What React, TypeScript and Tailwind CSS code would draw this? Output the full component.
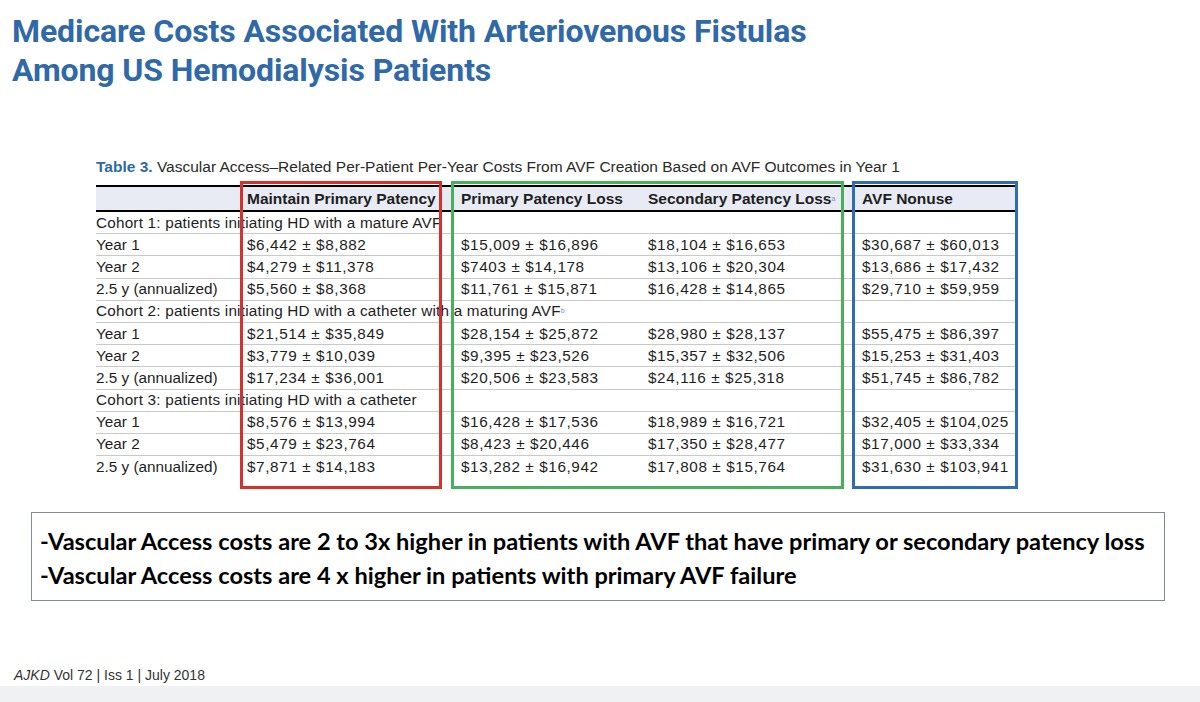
import React from "react";

type Row =
  | { kind: "cohort"; text: string; sup?: string }
  | { kind: "data"; label: string; vals: [string, string, string, string] };

const ROWS: Row[] = [
  { kind: "cohort", text: "Cohort 1: patients initiating HD with a mature AVF" },
  { kind: "data", label: "Year 1", vals: ["$6,442 ± $8,882", "$15,009 ± $16,896", "$18,104 ± $16,653", "$30,687 ± $60,013"] },
  { kind: "data", label: "Year 2", vals: ["$4,279 ± $11,378", "$7403 ± $14,178", "$13,106 ± $20,304", "$13,686 ± $17,432"] },
  { kind: "data", label: "2.5 y (annualized)", vals: ["$5,560 ± $8,368", "$11,761 ± $15,871", "$16,428 ± $14,865", "$29,710 ± $59,959"] },
  { kind: "cohort", text: "Cohort 2: patients initiating HD with a catheter with a maturing AVF", sup: "b" },
  { kind: "data", label: "Year 1", vals: ["$21,514 ± $35,849", "$28,154 ± $25,872", "$28,980 ± $28,137", "$55,475 ± $86,397"] },
  { kind: "data", label: "Year 2", vals: ["$3,779 ± $10,039", "$9,395 ± $23,526", "$15,357 ± $32,506", "$15,253 ± $31,403"] },
  { kind: "data", label: "2.5 y (annualized)", vals: ["$17,234 ± $36,001", "$20,506 ± $23,583", "$24,116 ± $25,318", "$51,745 ± $86,782"] },
  { kind: "cohort", text: "Cohort 3: patients initiating HD with a catheter" },
  { kind: "data", label: "Year 1", vals: ["$8,576 ± $13,994", "$16,428 ± $17,536", "$18,989 ± $16,721", "$32,405 ± $104,025"] },
  { kind: "data", label: "Year 2", vals: ["$5,479 ± $23,764", "$8,423 ± $20,446", "$17,350 ± $28,477", "$17,000 ± $33,334"] },
  { kind: "data", label: "2.5 y (annualized)", vals: ["$7,871 ± $14,183", "$13,282 ± $16,942", "$17,808 ± $15,764", "$31,630 ± $103,941"] },
];

const GRID = "grid grid-cols-[148px_214px_187px_214px_156px]";

export default function App() {
  return (
    <div
      className="w-[1200px] h-[702px] bg-white flex flex-col overflow-hidden"
      style={{ fontFamily: "'Liberation Sans', Arial, sans-serif" }}
    >
      {/* Title */}
      <div
        className="pt-[12px] pl-[12px] text-[32px] leading-[39px] font-bold text-[#2f69a8] tracking-[-0.1px]"
        style={{ fontFamily: "Roboto, 'Liberation Sans', sans-serif" }}
      >
        <div>Medicare Costs Associated With Arteriovenous Fistulas</div>
        <div>Among US Hemodialysis Patients</div>
      </div>

      {/* Table */}
      <div className="pl-[96px] mt-[68px]">
        <div className="text-[15.5px] leading-[18px] text-[#2a2a2a]">
          <span className="font-bold text-[#2c6aa8]">Table 3.</span> Vascular Access–Related Per-Patient Per-Year Costs From AVF Creation Based on AVF Outcomes in Year 1
        </div>

        <div className="relative w-[919px] mt-[9px] text-[#1e1e1e]">
          <div className={`${GRID} h-[27px] items-center bg-[#e9ebf4] border-t-2 border-b-2 border-black text-[15.5px] font-bold`}>
            <div />
            <div className="pl-[3px]">Maintain Primary Patency</div>
            <div className="pl-[3px]">Primary Patency Loss</div>
            <div className="pl-[3px]">
              Secondary Patency Loss<sup className="text-[7px] text-[#7b8fc4] font-normal">a</sup>
            </div>
            <div className="pl-[3px]">AVF Nonuse</div>
          </div>

          {ROWS.map((r, i) => (
            <div
              key={i}
              className={`${GRID} h-[22.2px] items-center text-[15.3px] leading-[18px] ${
                i < ROWS.length - 1 ? "border-b border-[#c9c9c9]" : ""
              }`}
            >
              {r.kind === "cohort" ? (
                <div className="col-span-5 whitespace-nowrap tracking-[0.2px]">
                  {r.text}
                  {r.sup && <sup className="text-[7px] text-[#7b8fc4]">{r.sup}</sup>}
                </div>
              ) : (
                <>
                  <div className="whitespace-nowrap">{r.label}</div>
                  {r.vals.map((v, j) => (
                    <div key={j} className="pl-[3px] whitespace-nowrap tracking-[0.6px]">
                      {v}
                    </div>
                  ))}
                </>
              )}
            </div>
          ))}

          {/* highlight boxes laid over the table */}
          <div className="absolute left-[144px] top-[-4px] w-[202px] h-[308px] border-[3px] border-[#d6322b]" />
          <div className="absolute left-[355px] top-[-4px] w-[393px] h-[308px] border-[3px] border-[#46b05a]" />
          <div className="absolute left-[756px] top-[-4px] w-[166px] h-[308px] border-[3px] border-[#2e6db4]" />
        </div>
      </div>

      {/* Takeaways */}
      <div className="ml-[31px] mt-[34px] w-[1134px] h-[89px] border-[1.5px] border-[#7f8b99] pl-[8px] pt-[11px]">
        <div
          className="text-[23.6px] leading-[34px] font-bold text-black"
          style={{ fontFamily: "Lato, 'Open Sans', sans-serif" }}
        >
          <div>-Vascular Access costs are 2 to 3x higher in patients with AVF that have primary or secondary patency loss</div>
          <div>-Vascular Access costs are 4 x higher in patients with primary AVF failure</div>
        </div>
      </div>

      {/* Footer */}
      <div className="mt-auto pl-[14px] pb-[3px] text-[14px] leading-[16px] text-[#333]">
        <span className="italic">AJKD</span> Vol 72 | Iss 1 | July 2018
      </div>
      <div className="h-[16px] bg-[#f0f1f3]" />
    </div>
  );
}
